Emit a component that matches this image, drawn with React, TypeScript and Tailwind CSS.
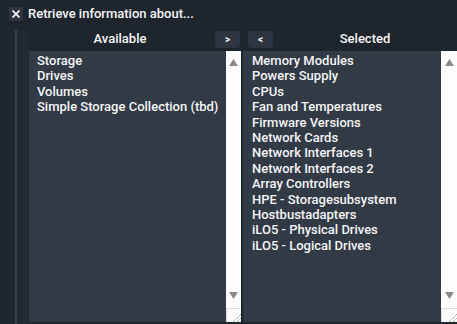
import { X } from 'lucide-react';

const available = ['Storage', 'Drives', 'Volumes', 'Simple Storage Collection (tbd)'];
const selected = [
  'Memory Modules',
  'Powers Supply',
  'CPUs',
  'Fan and Temperatures',
  'Firmware Versions',
  'Network Cards',
  'Network Interfaces 1',
  'Network Interfaces 2',
  'Array Controllers',
  'HPE - Storagesubsystem',
  'Hostbustadapters',
  'iLO5 - Physical Drives',
  'iLO5 - Logical Drives',
];

function Scrollbar({ wide }: { wide?: boolean }) {
  return (
    <div className={`${wide ? 'w-[16px]' : 'w-[15px]'} bg-[#fdfdfd] flex flex-col items-center shrink-0`}>
      <div className="pt-[8px]">
        <svg width="9" height="7" viewBox="0 0 9 7">
          <polygon points="4.5,0 9,7 0,7" fill="#8a8a8a" />
        </svg>
      </div>
      <div className="flex-1" />
      <div className="pb-[9px]">
        <svg width="9" height="7" viewBox="0 0 9 7">
          <polygon points="0,0 9,0 4.5,7" fill="#8a8a8a" />
        </svg>
      </div>
      <div className="w-full h-[14px] border-t border-l border-[#dcdcdc] bg-[#fafafa] flex items-end justify-end">
        <svg width="10" height="10" viewBox="0 0 10 10">
          <line x1="2" y1="10" x2="10" y2="2" stroke="#777" strokeWidth="1" strokeDasharray="1 1" />
          <line x1="6" y1="10" x2="10" y2="6" stroke="#777" strokeWidth="1" strokeDasharray="1 1" />
        </svg>
      </div>
    </div>
  );
}

function ListBox({ items, padLeft, wideBar }: { items: string[]; padLeft: string; wideBar?: boolean }) {
  return (
    <div className="flex h-[271px] bg-[#323a46] rounded-bl-[4px] overflow-hidden">
      <div className={`flex-1 pt-[2px] ${padLeft}`}>
        {items.map((it) => (
          <div key={it} className="text-[13px] leading-[15.4px] font-medium text-[#f4f4f4] whitespace-nowrap">
            {it}
          </div>
        ))}
      </div>
      <Scrollbar wide={wideBar} />
    </div>
  );
}

export default function App() {
  return (
    <div
      className="w-[457px] h-[324px] bg-[#1f252d] overflow-hidden flex flex-col"
      style={{ fontFamily: 'Roboto, "Liberation Sans", sans-serif' }}
    >
      {/* Title */}
      <div className="h-[30px] flex items-start pt-[7px] pl-[9px] gap-[5px] shrink-0">
        <div className="w-[14px] h-[14px] bg-[#2f3641] rounded-[2px] flex items-center justify-center">
          <X className="w-[12px] h-[12px] text-white" strokeWidth={3.5} />
        </div>
        <span className="text-[13px] leading-[14px] font-medium text-[#f4f4f4]">Retrieve information about...</span>
      </div>

      <div className="flex flex-1">
        {/* gutter */}
        <div className="w-[15px] shrink-0" />
        <div className="w-[2px] bg-[#39404a] shrink-0" />
        <div className="w-[12px] bg-[#232931] shrink-0" />

        {/* Available */}
        <div className="w-[212px] flex flex-col shrink-0">
          <div className="h-[21px] flex items-start">
            <div className="flex-1 text-center text-[13px] leading-[16px] pt-[1px] pr-[4px] font-medium text-[#f4f4f4]">Available</div>
            <button className="w-[25px] h-[17px] mt-[1px] mr-[1px] bg-[#2e3540] rounded-[4px] text-[10px] font-bold text-[#f4f4f4] leading-[17px]">
              &gt;
            </button>
          </div>
          <ListBox items={available} padLeft="pl-[8px]" />
        </div>

        <div className="w-[2px] shrink-0" />

        {/* Selected */}
        <div className="w-[214px] flex flex-col shrink-0">
          <div className="h-[21px] flex items-start">
            <button className="w-[25px] h-[17px] mt-[1px] ml-[5px] bg-[#2e3540] rounded-[4px] text-[10px] font-bold text-[#f4f4f4] leading-[17px]">
              &lt;
            </button>
            <div className="flex-1 text-center text-[13px] leading-[16px] pt-[1px] font-medium text-[#f4f4f4]">Selected</div>
          </div>
          <ListBox items={selected} padLeft="pl-[9px]" wideBar />
        </div>
      </div>
    </div>
  );
}
